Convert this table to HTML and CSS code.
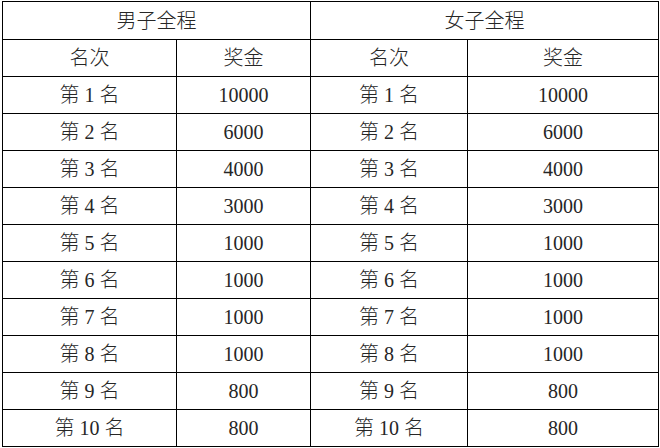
FILE: index.html
```html
<!DOCTYPE html>
<html lang="zh">
<head>
<meta charset="utf-8">
<link rel="stylesheet" href="styles.css">
</head>
<body>
<table class="prize">
  <colgroup>
    <col class="c1"><col class="c2"><col class="c3"><col class="c4">
  </colgroup>
  <tr class="head"><td colspan="2">男子全程</td><td colspan="2">女子全程</td></tr>
  <tr><td>名次</td><td>奖金</td><td>名次</td><td>奖金</td></tr>
  <tr><td>第 1 名</td><td>10000</td><td>第 1 名</td><td>10000</td></tr>
  <tr><td>第 2 名</td><td>6000</td><td>第 2 名</td><td>6000</td></tr>
  <tr><td>第 3 名</td><td>4000</td><td>第 3 名</td><td>4000</td></tr>
  <tr><td>第 4 名</td><td>3000</td><td>第 4 名</td><td>3000</td></tr>
  <tr><td>第 5 名</td><td>1000</td><td>第 5 名</td><td>1000</td></tr>
  <tr><td>第 6 名</td><td>1000</td><td>第 6 名</td><td>1000</td></tr>
  <tr><td>第 7 名</td><td>1000</td><td>第 7 名</td><td>1000</td></tr>
  <tr><td>第 8 名</td><td>1000</td><td>第 8 名</td><td>1000</td></tr>
  <tr><td>第 9 名</td><td>800</td><td>第 9 名</td><td>800</td></tr>
  <tr><td>第 10 名</td><td>800</td><td>第 10 名</td><td>800</td></tr>
</table>
</body>
</html>
```

FILE: styles.css
```css
html, body {
  margin: 0;
  padding: 0;
  background: #fff;
}
.prize {
  margin: 1px 0 0 2px;
  border-collapse: collapse;
  table-layout: fixed;
  width: 657px;
  font-family: "Liberation Serif", "Noto Sans CJK SC", serif;
  font-size: 20px;
  font-weight: 300;
  color: #262626;
}
.c1 { width: 174px; }
.c2 { width: 134px; }
.c3 { width: 157px; }
.c4 { width: 191px; }
.prize td {
  border: 1px solid #000;
  height: 36px;
  padding: 0;
  text-align: center;
  vertical-align: middle;
  line-height: 20px;
}
.prize .head td {
  height: 37px;
}
```
